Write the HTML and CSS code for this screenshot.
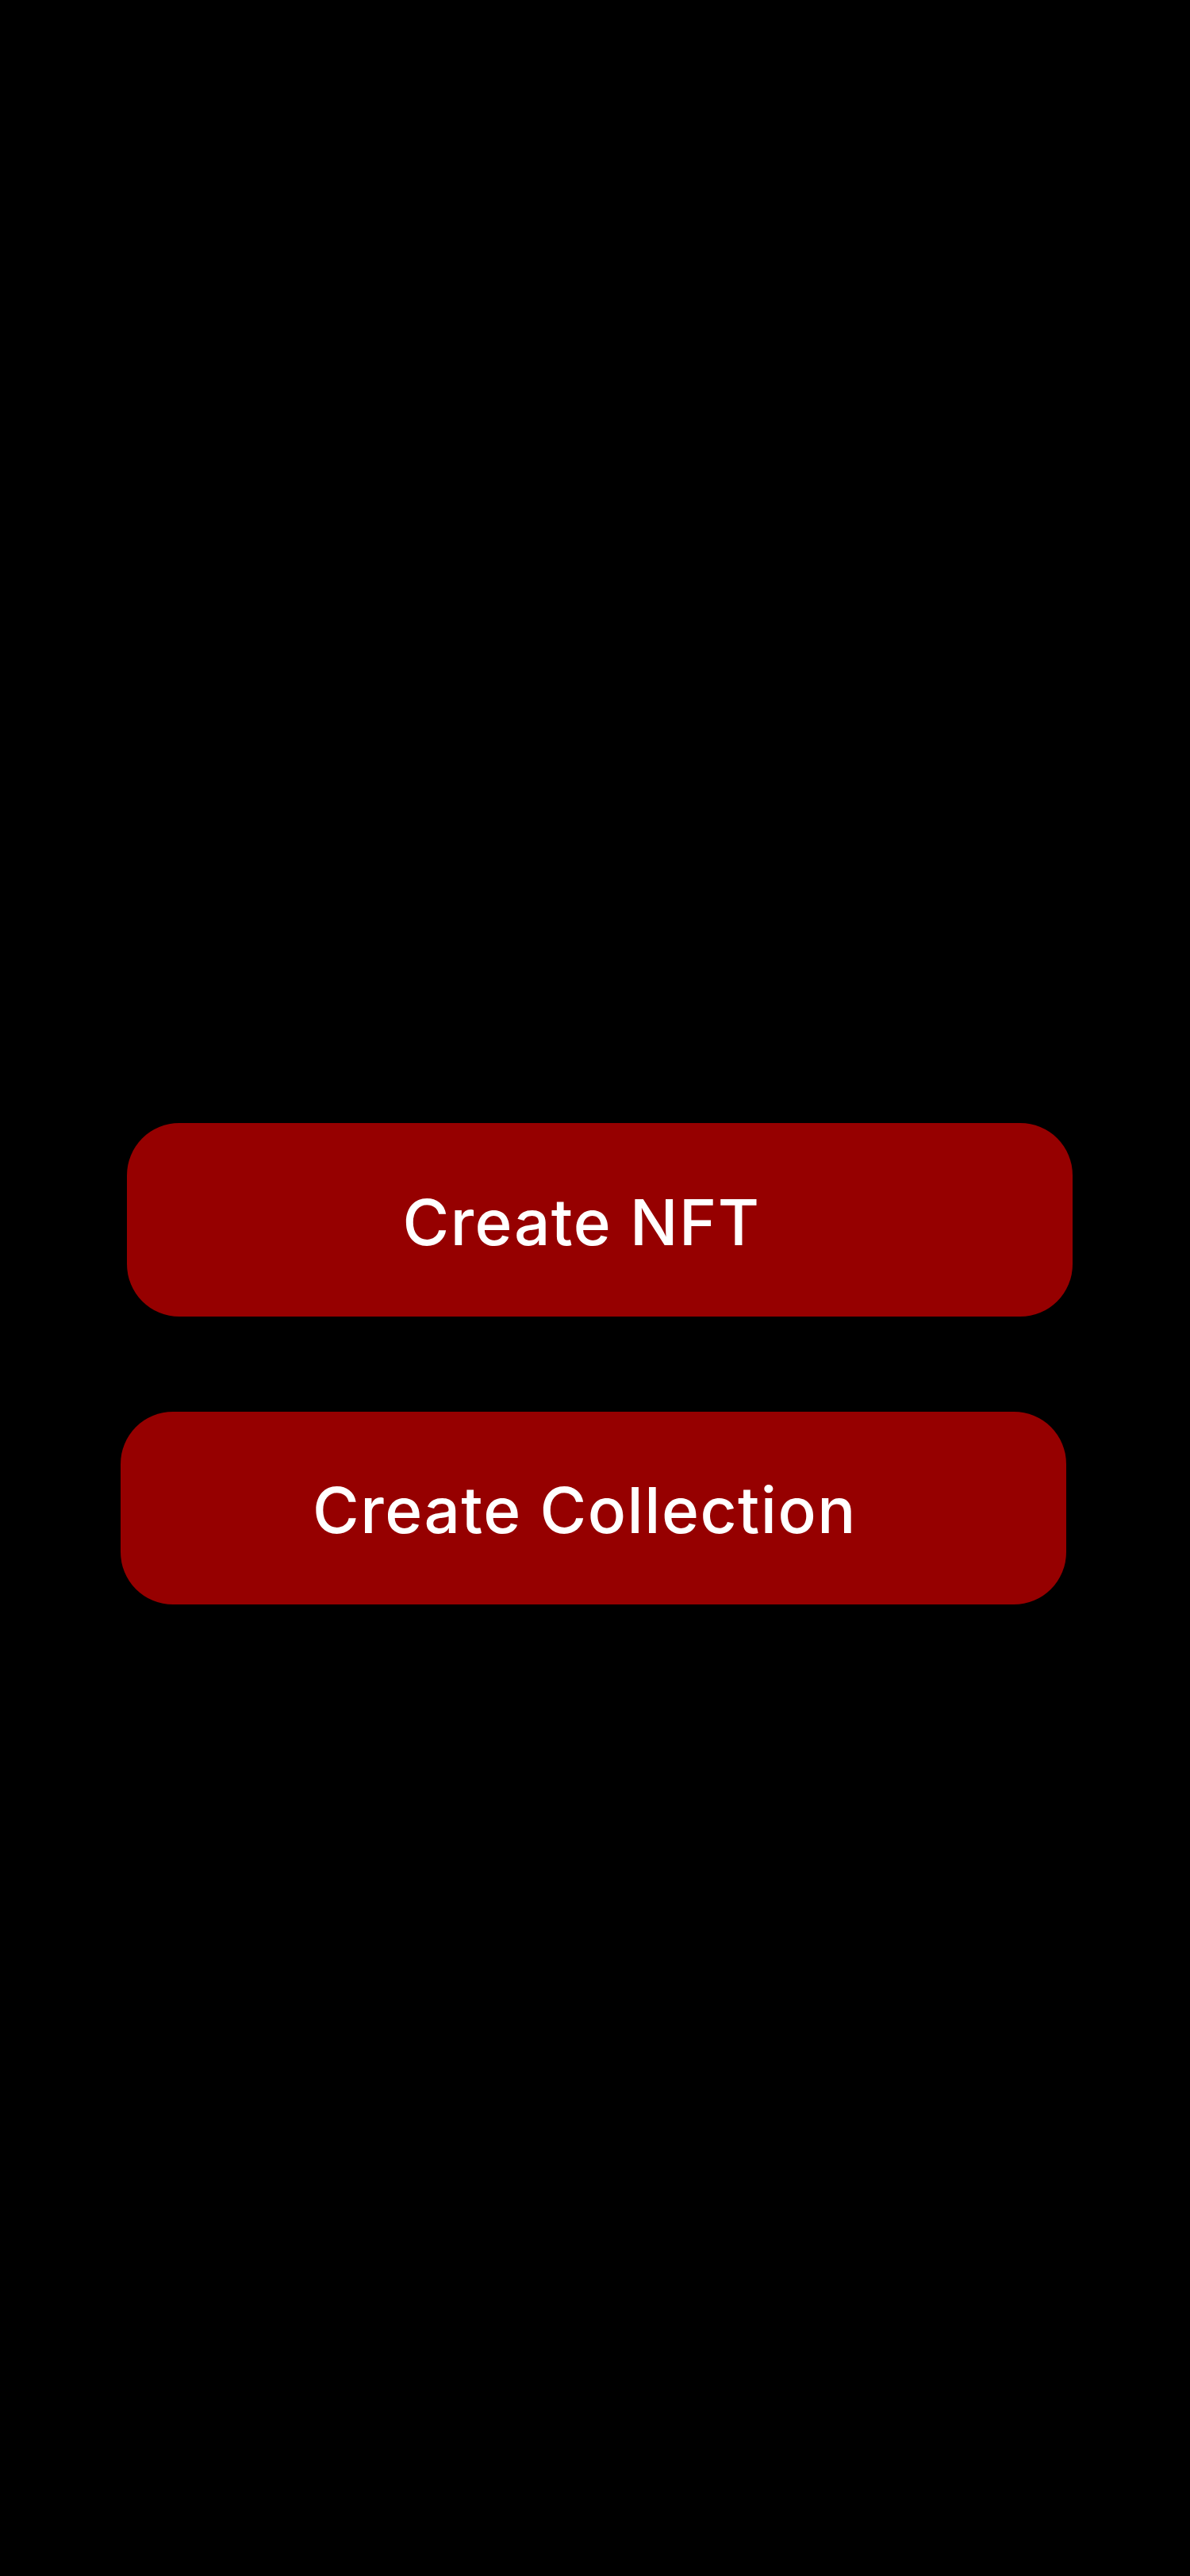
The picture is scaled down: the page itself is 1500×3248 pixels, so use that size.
FILE: index.html
```html
<!DOCTYPE html>
<html lang="en">
<head>
<meta charset="utf-8">
<title>Create</title>
<link rel="stylesheet" href="styles.css">
</head>
<body>
<main class="screen">
  <div class="actions">
    <button class="btn btn-nft" type="button">Create NFT</button>
    <button class="btn btn-collection" type="button">Create Collection</button>
  </div>
</main>
</body>
</html>
```
FILE: styles.css
```css
html, body {
  margin: 0;
  padding: 0;
  background: #000;
}
.screen {
  min-height: 3248px;
  width: 1500px;
  background: #000;
}
.actions {
  display: flex;
  flex-direction: column;
  gap: 120px;
  padding-top: 1416px;
}
.btn {
  width: 1192px;
  border: none;
  border-radius: 66px;
  background: #960000;
  color: #fff;
  font-family: "Inter", "Noto Sans", "Liberation Sans", sans-serif;
  font-weight: 500;
  font-size: 80px;
  letter-spacing: 1.5px;
  display: flex;
  align-items: center;
  justify-content: center;
  padding: 4px 0 0 0;
  cursor: pointer;
}
.btn-nft {
  height: 244px;
  margin-left: 160px;
  padding-right: 46px;
}
.btn-collection {
  height: 243px;
  margin-left: 152px;
  padding-right: 22px;
}
```
